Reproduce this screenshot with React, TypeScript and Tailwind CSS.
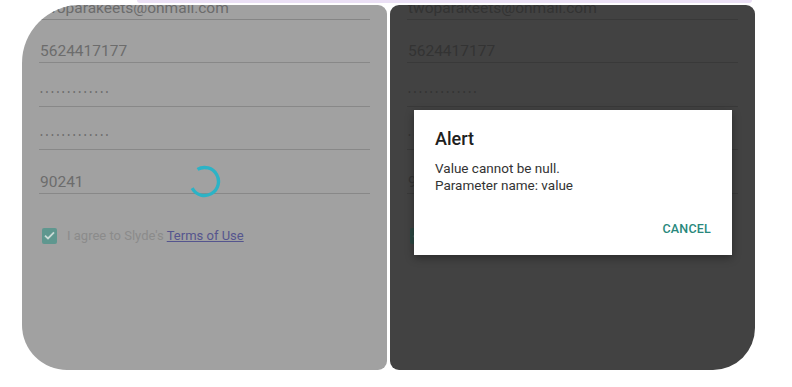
import React from 'react';

type Tone = {
  text: string;
  line: string;
  firstLine: string;
  box: string;
  tick: string;
  label: string;
  link: string;
};

const light: Tone = {
  text: 'text-[#6c6c6c]',
  line: 'border-[#888888]',
  firstLine: 'border-[#858585]',
  box: 'bg-[#5f978f]',
  tick: '#c9dad6',
  label: 'text-[#8b8b8b]',
  link: 'text-[#55558e] decoration-[#55558e]',
};

const dark: Tone = {
  text: 'text-[#333333]',
  line: 'border-[#393939]',
  firstLine: 'border-[#393939]',
  box: 'bg-[#2c4843]',
  tick: '#3d5a55',
  label: 'text-[#393939]',
  link: 'text-[#36364f] decoration-[#36364f]',
};

const fields = [
  { value: 'twoparakeets@onmail.com', secret: false },
  { value: '5624417177', secret: false },
  { value: '•••••••••••••', secret: true },
  { value: '•••••••••••••', secret: true },
  { value: '90241', secret: false },
];

const SignupForm: React.FC<{ tone: Tone }> = ({ tone }) => (
  <div className="mt-[-29px] pl-[17px] pr-[17px]">
    {fields.map((f, i) => (
      <div
        key={i}
        className={`h-[43.5px] flex items-end ${f.secret ? 'pb-[10px]' : 'pb-[1px]'} ${i === 0 ? 'border-b-[1.5px] ' + tone.firstLine : 'border-b ' + tone.line}`}
      >
        {f.secret ? (
          <span className={`leading-[8px] text-[8.5px] tracking-[2.6px] pl-[1px] ${tone.text}`}>{f.value}</span>
        ) : (
          <span className={`leading-[19px] text-[15.5px] pl-[1px] ${tone.text}`}>{f.value}</span>
        )}
      </div>
    ))}

    <div className="flex items-center gap-[10px] mt-[34px] pl-[3px]">
      <div className={`w-[15px] h-[16px] rounded-[2px] flex items-center justify-center ${tone.box}`}>
        <svg width="11" height="9" viewBox="0 0 11 9" fill="none">
          <path d="M1 4.6 L4 7.5 L10 1.3" stroke={tone.tick} strokeWidth="1.8" />
        </svg>
      </div>
      <span className={`text-[13px] leading-[16px] ${tone.label}`}>
        I agree to Slyde's <span className={`underline ${tone.link}`}>Terms of Use</span>
      </span>
    </div>
  </div>
);

export default function App() {
  return (
    <div className="w-[792px] h-[387px] bg-white overflow-hidden" style={{ fontFamily: 'Roboto, "Noto Sans", sans-serif' }}>
      {/* strip of the frame above, cut off */}
      <div className="ml-[137px] w-[615px] h-[3px] bg-[#ebe0f5] rounded-b-[3px]" />

      <div className="flex gap-[3px] pl-[22px] mt-[2px]">
        {/* Loading state */}
        <div className="relative w-[365px] h-[365px] bg-[#a1a1a1] overflow-hidden rounded-tl-[58px] rounded-bl-[45px] rounded-tr-[9px] rounded-br-[9px]">
          <SignupForm tone={light} />
          <svg className="absolute left-[166px] top-[160px]" width="33" height="33" viewBox="0 0 33 33">
            <circle
              cx="16.5"
              cy="16.5"
              r="14"
              fill="none"
              stroke="#2cb3c6"
              strokeWidth="3.4"
              strokeLinecap="butt"
              strokeDasharray="66 22"
              transform="rotate(-120 16.5 16.5)"
            />
          </svg>
        </div>

        {/* Alert state */}
        <div className="relative w-[365px] h-[365px] bg-[#424242] overflow-hidden rounded-tl-[9px] rounded-tr-[9px] rounded-bl-[9px] rounded-br-[42px]">
          <SignupForm tone={dark} />
          <div className="absolute left-[24px] top-[105px] w-[318px] h-[145px] bg-white shadow-[0_3px_8px_rgba(0,0,0,0.35)] flex flex-col pl-[21px] pr-[21px]">
            <h3 className="text-[18px] leading-[22px] font-medium text-[#202020] mt-[18px]">Alert</h3>
            <p className="text-[13.5px] leading-[17px] text-[#333333] mt-[10px]">
              Value cannot be null.
              <br />
              Parameter name: value
            </p>
            <div className="flex justify-end mt-[27px]">
              <span className="text-[12.5px] leading-[16px] font-medium text-[#28887c] tracking-[0.2px]">CANCEL</span>
            </div>
          </div>
        </div>
      </div>
    </div>
  );
}
